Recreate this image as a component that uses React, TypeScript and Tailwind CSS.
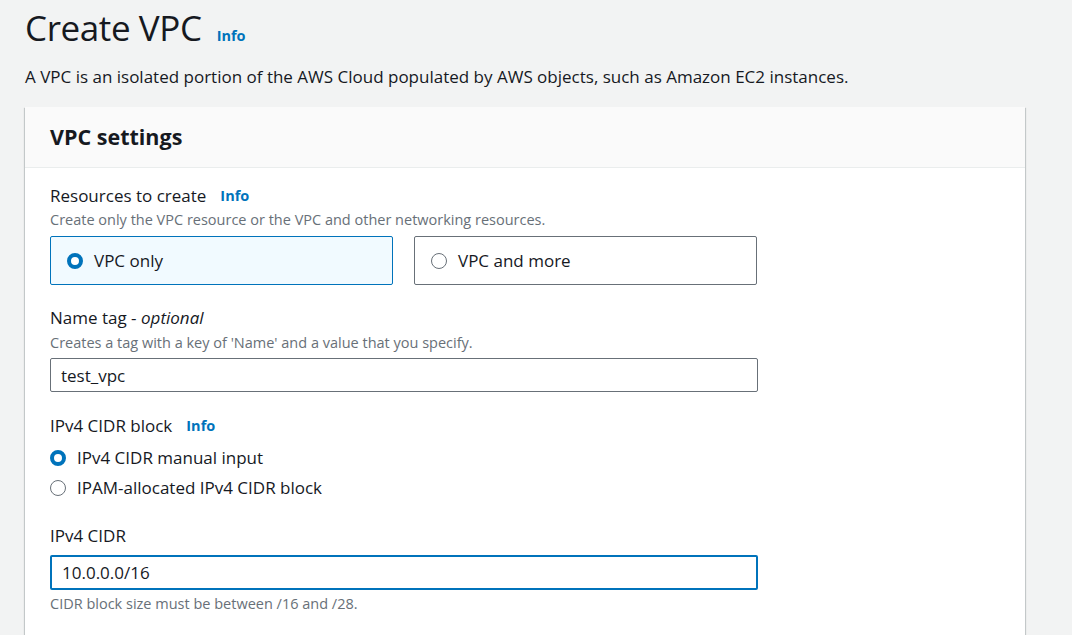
import { useState } from 'react'

function Info({ className = '' }: { className?: string }) {
  return <span className={`text-[14.5px] font-bold text-[#0073bb] ${className}`}>Info</span>
}

function Radio({ checked }: { checked: boolean }) {
  return checked ? (
    <span className="inline-block w-[16px] h-[16px] rounded-full border-[4.5px] border-[#0073bb] bg-white shrink-0" />
  ) : (
    <span className="inline-block w-[16px] h-[16px] rounded-full border-[1.5px] border-[#687078] bg-white shrink-0" />
  )
}

export default function App() {
  const [mode, setMode] = useState<'only' | 'more'>('only')
  const [cidrMode, setCidrMode] = useState<'manual' | 'ipam'>('manual')

  return (
    <div className="min-h-screen bg-[#f2f3f3] text-[#16191f] font-['Open_Sans',sans-serif] pl-[25px] pt-[6px]">
      {/* Title */}
      <div className="flex items-baseline gap-[15px]">
        <h1 className="text-[35px] leading-[44px] tracking-[-0.4px]">Create VPC</h1>
        <Info />
      </div>
      <p className="mt-[16px] text-[17px] leading-[22px]">
        A VPC is an isolated portion of the AWS Cloud populated by AWS objects, such as Amazon EC2 instances.
      </p>

      {/* Panel */}
      <div className="mt-[19px] w-[1000px] bg-white shadow-[0_1px_1px_0_rgba(0,28,36,0.3),1px_1px_1px_0_rgba(0,28,36,0.15),-1px_1px_1px_0_rgba(0,28,36,0.15)]">
        <div className="h-[61px] bg-[#fafafa] border-b border-[#eaeded] px-[25px] flex items-center">
          <h2 className="text-[21.5px] font-bold leading-[28px]">VPC settings</h2>
        </div>

        <div className="px-[25px] pt-[16px] pb-[30px]">
          {/* Resources */}
          <div className="flex items-center gap-[14px] h-[24px]">
            <span className="text-[17px]">Resources to create</span>
            <Info />
          </div>
          <p className="text-[14.5px] text-[#687078] leading-[22px] mt-[1px]">
            Create only the VPC resource or the VPC and other networking resources.
          </p>
          <div className="grid grid-cols-2 gap-[21px] w-[707px] mt-[5px]">
            <button
              onClick={() => setMode('only')}
              className={`h-[49px] flex items-center gap-[11px] px-[16px] rounded-[2px] border text-[17px] ${
                mode === 'only' ? 'bg-[#f1faff] border-[#0073bb]' : 'bg-white border-[#687078]'
              }`}
            >
              <Radio checked={mode === 'only'} />
              VPC only
            </button>
            <button
              onClick={() => setMode('more')}
              className={`h-[49px] flex items-center gap-[11px] px-[16px] rounded-[2px] border text-[17px] ${
                mode === 'more' ? 'bg-[#f1faff] border-[#0073bb]' : 'bg-white border-[#687078]'
              }`}
            >
              <Radio checked={mode === 'more'} />
              VPC and more
            </button>
          </div>

          {/* Name tag */}
          <div className="mt-[21px] text-[17px] leading-[24px]">
            Name tag - <i>optional</i>
          </div>
          <p className="text-[14.5px] text-[#687078] leading-[22px] mt-[2px]">
            Creates a tag with a key of 'Name' and a value that you specify.
          </p>
          <input
            defaultValue="test_vpc"
            className="mt-[4px] w-[708px] h-[34px] border border-[#687078] rounded-[2px] px-[10px] text-[17px] outline-none"
          />

          {/* CIDR block */}
          <div className="mt-[22px] flex items-center gap-[14px] h-[24px]">
            <span className="text-[17px]">IPv4 CIDR block</span>
            <Info />
          </div>
          <div className="mt-[8px] flex flex-col gap-[6px]">
            <label className="flex items-center gap-[11px] text-[17px] leading-[24px] cursor-pointer" onClick={() => setCidrMode('manual')}>
              <Radio checked={cidrMode === 'manual'} />
              IPv4 CIDR manual input
            </label>
            <label className="flex items-center gap-[11px] text-[17px] leading-[24px] cursor-pointer" onClick={() => setCidrMode('ipam')}>
              <Radio checked={cidrMode === 'ipam'} />
              IPAM-allocated IPv4 CIDR block
            </label>
          </div>

          {/* CIDR */}
          <div className="mt-[24px] text-[17px] leading-[24px]">IPv4 CIDR</div>
          <input
            defaultValue="10.0.0.0/16"
            autoFocus
            onFocus={(e) => {
              const len = e.currentTarget.value.length
              e.currentTarget.setSelectionRange(len, len)
            }}
            className="mt-[7px] w-[708px] h-[35px] border-2 border-[#0073bb] rounded-[2px] px-[10px] text-[17px] outline-none caret-black"
          />
          <p className="text-[14.5px] text-[#687078] leading-[22px] mt-[3px]">
            CIDR block size must be between /16 and /28.
          </p>
        </div>
      </div>
    </div>
  )
}
